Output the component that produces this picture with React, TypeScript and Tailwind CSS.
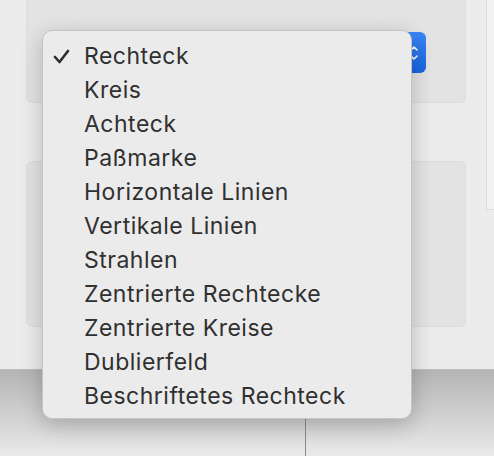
import React from "react";

const items = [
  "Rechteck",
  "Kreis",
  "Achteck",
  "Paßmarke",
  "Horizontale Linien",
  "Vertikale Linien",
  "Strahlen",
  "Zentrierte Rechtecke",
  "Zentrierte Kreise",
  "Dublierfeld",
  "Beschriftetes Rechteck",
];

export default function App() {
  return (
    <div className="relative w-[494px] h-[456px] overflow-hidden bg-[#ececec]" style={{ fontFamily: "Inter, 'Noto Sans', sans-serif" }}>
      {/* window */}
      <div className="flex h-[370px] border-b border-[#bdbdbd] bg-[#ececec]">
        <div className="ml-[26px] w-[440px] flex flex-col">
          <div className="relative h-[103px] rounded-b-[6px] bg-[#e3e3e3] border-x border-b border-[#dcdcdc]">
            <div className="absolute left-[368px] top-[32px] w-[31px] h-[41px] rounded-[6px] bg-gradient-to-b from-[#3b86f7] to-[#1764e0] flex items-center justify-end pr-[8px]">
              <svg width="8" height="18" viewBox="0 0 8 18" fill="none" stroke="white" strokeWidth="1.6" strokeLinecap="round" strokeLinejoin="round">
                <path d="M1 6 L4 3 L7 6" />
                <path d="M1 12 L4 15 L7 12" />
              </svg>
            </div>
          </div>
          <div className="mt-[58px] h-[166px] rounded-[6px] bg-[#e3e3e3] border border-[#dcdcdc]" />
        </div>
        <div className="ml-[20px] w-[8px] h-[210px] bg-[#f2f2f2] border-l border-b border-[#dedede] rounded-bl-[3px]" />
      </div>
      {/* below window */}
      <div className="flex h-[86px] bg-gradient-to-b from-[#b4b4b4] to-[#eaeaea]">
        <div className="ml-[305px] w-px h-full bg-[#8a8a8a]" />
      </div>
      {/* menu */}
      <div className="absolute left-[42px] top-[30px] w-[370px] h-[389px] rounded-[10px] bg-[#ebebeb] border border-[#c4c4c4] shadow-[0_6px_22px_rgba(0,0,0,0.22)] py-[8px]">
        {items.map((t, i) => (
          <div key={t} className="relative h-[34px] flex items-center pl-[41px] text-[23px] text-[#303030] tracking-[0.5px] leading-none">
            {i === 0 && (
              <svg className="absolute left-[10px] top-[10px]" width="17" height="15" viewBox="0 0 17 15" fill="none" stroke="#2c2c2c" strokeWidth="2.6" strokeLinecap="round" strokeLinejoin="round">
                <path d="M2 8 L6.5 13 L15 2" />
              </svg>
            )}
            <span>{t}</span>
          </div>
        ))}
      </div>
    </div>
  );
}
